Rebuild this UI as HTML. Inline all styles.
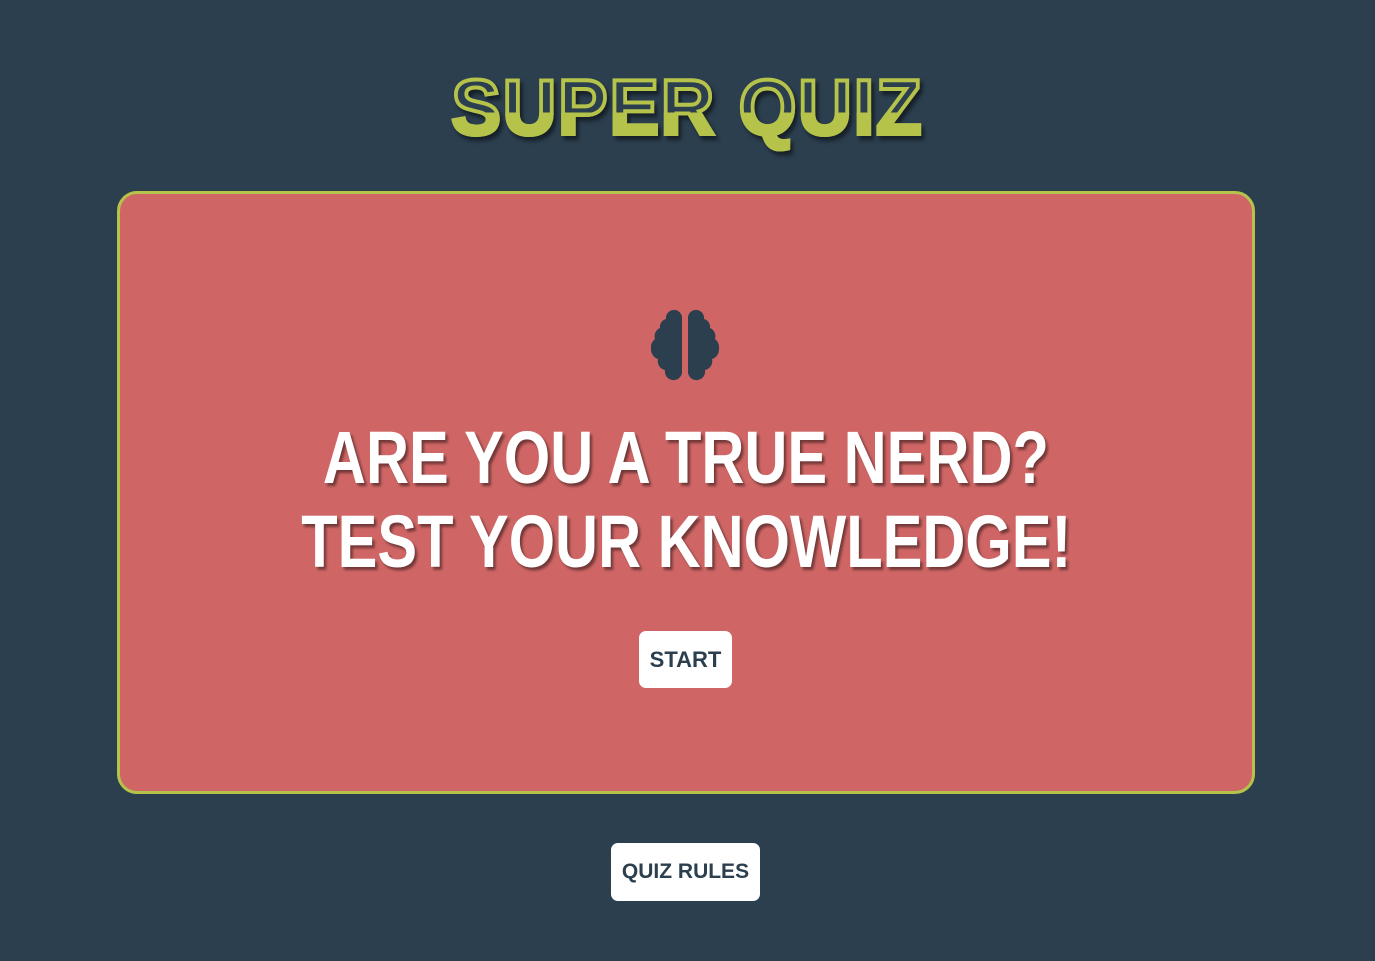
<!DOCTYPE html>
<html><head><meta charset="utf-8"><style>
html,body{margin:0;padding:0;}
body{width:1375px;height:961px;background:#2c3f4f;position:relative;overflow:hidden;font-family:"Liberation Sans",sans-serif;}
.title{position:absolute;left:0;right:0;top:62px;text-align:center;}
.title span{display:inline-block;font-weight:bold;font-size:78px;line-height:90px;letter-spacing:2px;transform:scaleX(0.95);
 background:linear-gradient(to bottom,#2c3f4f 0,#2c3f4f 56%,#b5c34a 56%,#b5c34a 100%);-webkit-background-clip:text;background-clip:text;color:transparent;
 -webkit-text-stroke:4px #b5c34a;filter:drop-shadow(3px 4px 2px rgba(0,0,0,.5));}
.card{position:absolute;left:117px;top:191px;width:1132px;height:597px;border:3px solid #b5c34a;border-radius:20px;background:#cf6665;}
.h{position:absolute;left:0;right:0;text-align:center;color:#fff;font-weight:bold;font-size:74px;line-height:80px;}
.h span{display:inline-block;transform:scaleX(0.805);text-shadow:3px 3px 3px rgba(0,0,0,.45);white-space:nowrap;}
.btn{position:absolute;background:#fff;border-radius:7px;color:#2c3f4f;font-weight:bold;font-size:22px;text-align:center;}
</style></head><body>
<div class="title"><span>SUPER QUIZ</span></div>
<div class="card">
 <svg style="position:absolute;left:531px;top:115px" width="72" height="72" viewBox="0 0 72 72">
  <g fill="#2c3f4f">
   <path d="M31 8a8 8 0 0 0-16 2a8 8 0 0 0-6 9a9 9 0 0 0-5 11a11 11 0 0 0-4 10a10 10 0 0 0 7 10a9 9 0 0 0 7 11a8 8 0 0 0 17 3z"/>
   <path d="M37 8a8 8 0 0 1 16 2a8 8 0 0 1 6 9a9 9 0 0 1 5 11a11 11 0 0 1 4 10a10 10 0 0 1-7 10a9 9 0 0 1-7 11a8 8 0 0 1-17 3z"/>
  </g>
 </svg>
 <div class="h" style="top:224px"><span>ARE YOU A TRUE NERD?</span></div>
 <div class="h" style="top:308px"><span>TEST YOUR KNOWLEDGE!</span></div>
 <div class="btn" style="left:519px;top:437px;width:93px;height:57px;line-height:57px;">START</div>
</div>
<div class="btn" style="left:611px;top:843px;width:149px;height:58px;line-height:58px;font-size:21px;">QUIZ RULES</div>
</body></html>
